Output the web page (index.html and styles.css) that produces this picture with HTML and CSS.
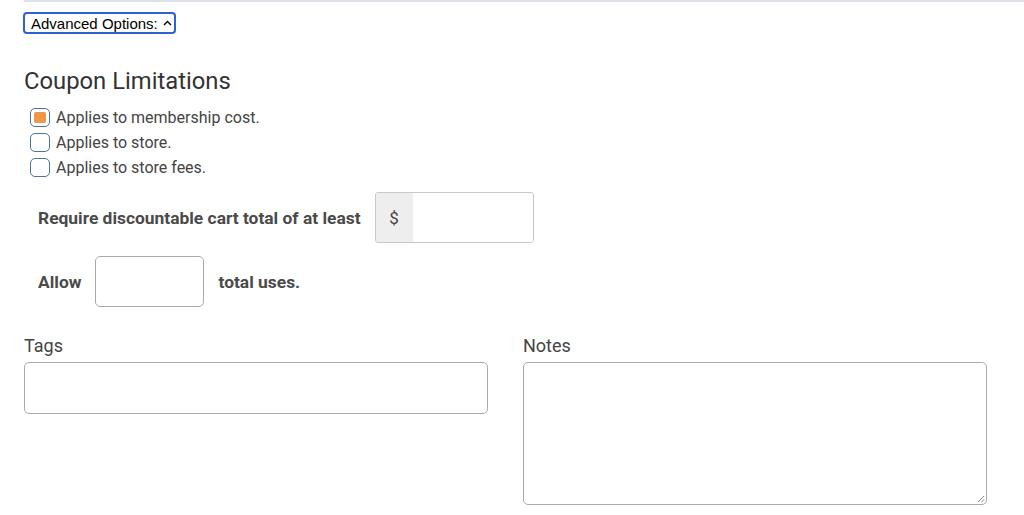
FILE: index.html
```html
<!DOCTYPE html>
<html>
<head>
<meta charset="utf-8">
<link rel="stylesheet" href="styles.css">
</head>
<body>
<div class="topline"></div>
<div class="page">
  <button class="adv" type="button">Advanced Options: <svg class="caret" width="9" height="6" viewBox="0 0 9 6"><path d="M1 5 L4.5 1.5 L8 5" fill="none" stroke="#000" stroke-width="1.4"/></svg></button>

  <h2 class="title">Coupon Limitations</h2>

  <ul class="checks">
    <li><span class="box checked"><span class="fill"></span></span><span class="lbl">Applies to membership cost.</span></li>
    <li><span class="box"></span><span class="lbl">Applies to store.</span></li>
    <li><span class="box"></span><span class="lbl">Applies to store fees.</span></li>
  </ul>

  <div class="row row-cart">
    <span class="strong">Require discountable cart total of at least</span>
    <div class="group">
      <span class="addon">$</span>
      <span class="gin"></span>
    </div>
  </div>

  <div class="row row-uses">
    <span class="strong">Allow</span>
    <span class="input small"></span>
    <span class="strong">total uses.</span>
  </div>

  <div class="fields">
    <div class="field">
      <label class="flabel">Tags</label>
      <span class="input tags"></span>
    </div>
    <div class="field">
      <label class="flabel">Notes</label>
      <span class="input notes"><svg class="grip" width="9" height="9" viewBox="0 0 9 9"><path d="M8 2 L2 8 M8 5.5 L5.5 8" stroke="#888" stroke-width="1"/></svg></span>
    </div>
  </div>
</div>
</body>
</html>
```

FILE: styles.css
```css
* { box-sizing: border-box; }
body {
  margin: 0;
  background: #fff;
  font-family: Roboto, "Liberation Sans", sans-serif;
  color: #444;
}
.topline {
  margin-left: 24px;
  height: 2px;
  background: #dde1e8;
}
.page {
  padding: 0 37px 0 24px;
}
.adv {
  display: flex;
  align-items: center;
  gap: 5px;
  margin: 10px 0 0 -1px;
  height: 22px;
  width: 153px;
  padding: 0 6px;
  border: 2px solid #2f62d0;
  border-radius: 4px;
  background: #fff;
  font-family: "Liberation Sans", Arial, sans-serif;
  font-size: 15px;
  color: #000;
  white-space: nowrap;
}
.caret { flex: none; margin-top: -1px; }
.title {
  margin: 33px 0 0 0;
  font-size: 23.8px;
  font-weight: 400;
  color: #333;
  line-height: 28px;
}
.checks {
  list-style: none;
  margin: 10px 0 0 0;
  padding: 0 0 0 6px;
}
.checks li {
  display: flex;
  align-items: center;
  height: 25px;
}
.box {
  width: 20px;
  height: 19px;
  border: 1.5px solid #4d7597;
  border-radius: 5px;
  display: flex;
  align-items: center;
  justify-content: center;
  margin-right: 6px;
}
.fill {
  width: 12px;
  height: 11px;
  background: #f0964a;
  border-radius: 2px;
}
.lbl {
  font-size: 16px;
  color: #444;
}
.row {
  display: flex;
  align-items: center;
  padding-left: 14px;
}
.row-cart { margin-top: 12px; }
.row-uses { margin-top: 13px; }
.strong {
  font-size: 17.4px;
  font-weight: 700;
  color: #4a4a4a;
}
.group {
  display: flex;
  margin-left: 14px;
  width: 159px;
  height: 51px;
  border: 1px solid #c8c8c8;
  border-radius: 3px;
  overflow: hidden;
}
.addon {
  width: 37px;
  background: #eee;
  display: flex;
  align-items: center;
  justify-content: center;
  font-size: 17px;
  color: #444;
}
.gin { flex: 1; background: #fff; }
.input {
  display: block;
  border: 1px solid #aaa;
  border-radius: 5px;
  background: #fff;
}
.small {
  width: 109px;
  height: 51px;
  margin: 0 14px 0 14px;
}
.fields {
  display: grid;
  grid-template-columns: 1fr 1fr;
  column-gap: 35px;
  margin-top: 28px;
}
.field { display: flex; flex-direction: column; }
.flabel {
  font-size: 18px;
  color: #444;
  line-height: 22px;
  margin-bottom: 5px;
}
.tags { height: 52px; }
.notes {
  height: 143px;
  position: relative;
}
.grip {
  position: absolute;
  right: 1px;
  bottom: 1px;
}
```
